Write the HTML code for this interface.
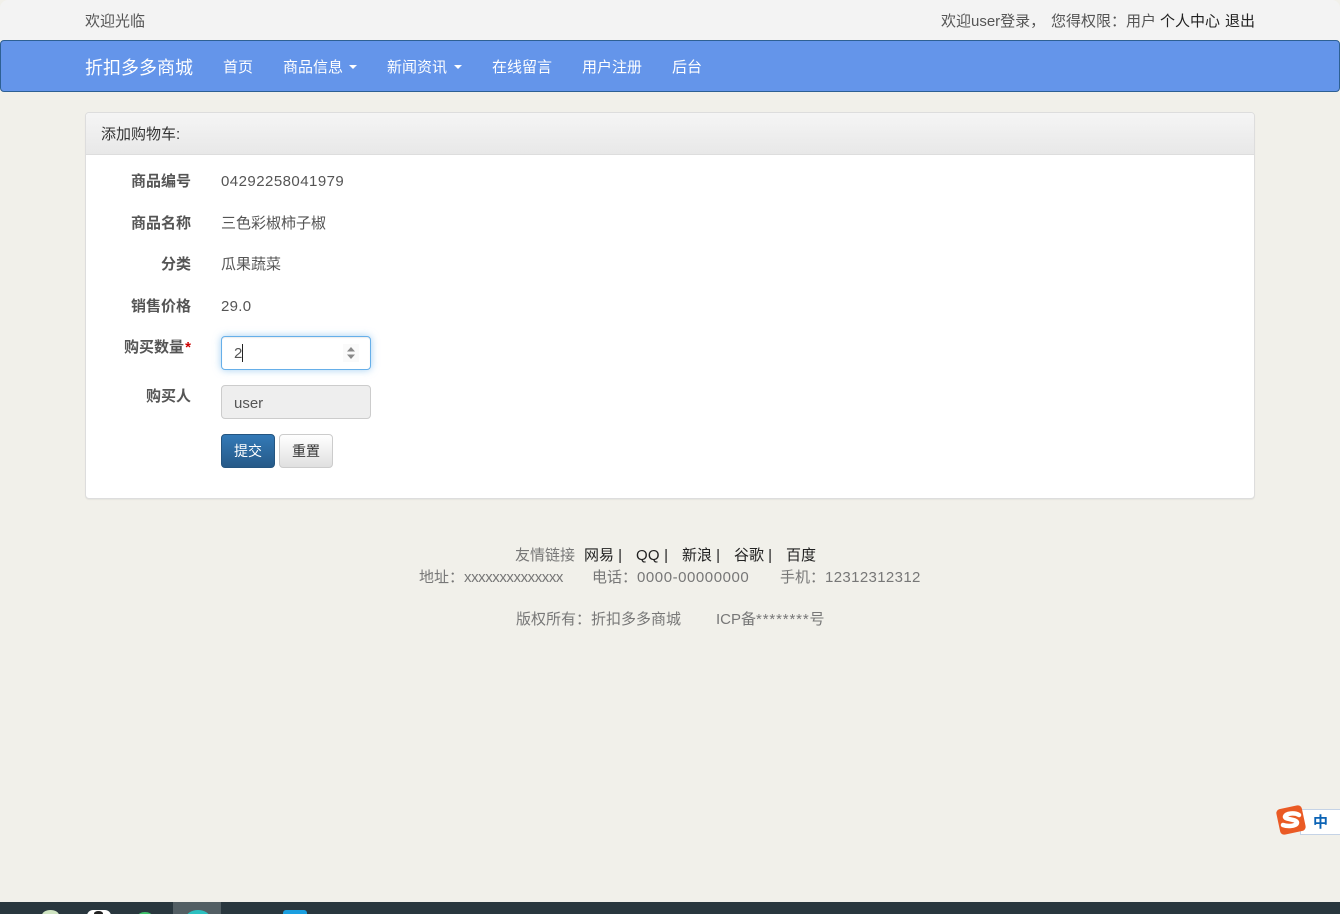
<!DOCTYPE html>
<html lang="zh-CN">
<head>
<meta charset="utf-8">
<title>添加购物车</title>
<style>
*{box-sizing:border-box}
html,body{margin:0;padding:0;width:1340px;height:914px;overflow:hidden}
body{position:relative;background:#f1f0ea;font-family:"Liberation Sans","Noto Sans CJK SC",sans-serif;font-size:15px;color:#555}
.t{position:absolute;white-space:pre;line-height:20px;height:20px}
.box{position:absolute}
.top{left:0;top:0;width:1340px;height:40px;background:#f3f3f3;border-radius:8px 8px 0 0}
.nav{left:0;top:40px;width:1340px;height:52px;background:#6495ea;border:1px solid #2e6093;border-radius:4px}
.n{color:#fff}
.caret{position:absolute;width:0;height:0;border-top:4px solid #fff;border-left:4px solid transparent;border-right:4px solid transparent}
.panel{left:85px;top:112px;width:1170px;height:387px;background:#fff;border:1px solid #ddd;border-radius:4px;box-shadow:0 1px 1px rgba(0,0,0,.05)}
.phead{left:86px;top:113px;width:1168px;height:42px;background:linear-gradient(#f5f5f5,#e8e8e8);border-bottom:1px solid #ddd;border-radius:3px 3px 0 0}
.lb{font-weight:bold;text-align:right;width:106px;left:85px}
.v{left:221px}
.f{color:#777}
.k{color:#222}
.task{left:0;top:902px;width:1340px;height:12px;background:#29373e;overflow:hidden}
</style>
</head>
<body>
<div class="box top"></div>
<div class="t" style="left:85px;top:12px">欢迎光临</div>
<div class="t" style="left:941px;top:12px">欢迎user登录，</div>
<div class="t" style="left:1051px;top:12px">您得权限：用户</div>
<div class="t k" style="left:1160px;top:12px">个人中心</div>
<div class="t k" style="left:1225px;top:12px">退出</div>

<div class="box nav"></div>
<div class="t n" style="left:85px;top:58px;font-size:18px">折扣多多商城</div>
<div class="t n" style="left:223px;top:58px">首页</div>
<div class="t n" style="left:283px;top:58px">商品信息</div>
<div class="caret" style="left:349px;top:65px"></div>
<div class="t n" style="left:387px;top:58px">新闻资讯</div>
<div class="caret" style="left:454px;top:65px"></div>
<div class="t n" style="left:492px;top:58px">在线留言</div>
<div class="t n" style="left:582px;top:58px">用户注册</div>
<div class="t n" style="left:672px;top:58px">后台</div>

<div class="box panel"></div>
<div class="box phead"></div>
<div class="t" style="left:101px;top:125px;color:#333">添加购物车:</div>

<div class="t lb" style="top:172px">商品编号</div>
<div class="t v" style="top:172px;letter-spacing:.46px">04292258041979</div>
<div class="t lb" style="top:214px">商品名称</div>
<div class="t v" style="top:214px">三色彩椒柿子椒</div>
<div class="t lb" style="top:255px">分类</div>
<div class="t v" style="top:255px">瓜果蔬菜</div>
<div class="t lb" style="top:297px">销售价格</div>
<div class="t v" style="top:297px;letter-spacing:.3px">29.0</div>

<div class="t lb" style="top:338px">购买数量<span style="color:#c00;display:inline-block;width:7px">*</span></div>
<div class="box" style="left:221px;top:336px;width:150px;height:34px;background:#fff;border:1px solid #66afe9;border-radius:4px;box-shadow:inset 0 1px 1px rgba(0,0,0,.075),0 0 8px rgba(102,175,233,.6)"></div>
<div class="t" style="left:234px;top:344px">2</div>
<div class="box" style="left:242px;top:344px;width:1px;height:18px;background:#222"></div>
<svg class="box" style="left:343px;top:344px" width="16" height="18" viewBox="0 0 16 18"><rect width="16" height="18" fill="#fafafa"/><path d="M4 7.500 8 3 12 7.500Z M4 10.500 8 15 12 10.500Z" fill="#8a8a8a"/></svg>

<div class="t lb" style="top:387px">购买人</div>
<div class="box" style="left:221px;top:385px;width:150px;height:34px;background:#eee;border:1px solid #ccc;border-radius:4px"></div>
<div class="t" style="left:234px;top:394px">user</div>

<div class="box" style="left:221px;top:434px;width:54px;height:34px;background:linear-gradient(#337ab7,#265a88);border:1px solid #245580;border-radius:4px"></div>
<div class="t" style="left:234px;top:441px;color:#fff;font-size:14px">提交</div>
<div class="box" style="left:279px;top:434px;width:54px;height:34px;background:linear-gradient(#fff,#e0e0e0);border:1px solid #ccc;border-radius:4px"></div>
<div class="t" style="left:292px;top:441px;color:#333;font-size:14px">重置</div>

<div class="t f" style="left:515px;top:546px">友情链接</div>
<div class="t k" style="left:584px;top:546px">网易 |</div>
<div class="t k" style="left:636px;top:546px;letter-spacing:.2px">QQ |</div>
<div class="t k" style="left:682px;top:546px">新浪 |</div>
<div class="t k" style="left:734px;top:546px">谷歌 |</div>
<div class="t k" style="left:786px;top:546px">百度</div>
<div class="t f" style="left:419px;top:568px">地址：<span style="letter-spacing:-.43px">xxxxxxxxxxxxxx</span></div>
<div class="t f" style="left:592px;top:568px">电话：<span style="letter-spacing:.55px">0000-00000000</span></div>
<div class="t f" style="left:780px;top:568px">手机：<span style="letter-spacing:.36px">12312312312</span></div>
<div class="t f" style="left:516px;top:610px">版权所有：折扣多多商城</div>
<div class="t f" style="left:716px;top:610px">ICP备<span style="letter-spacing:.85px">********</span>号</div>

<div class="box" style="left:1300px;top:809px;width:40px;height:26px;background:#fff;border:1px solid #c5d3e6;border-right:0"></div>
<div class="t" style="left:1313px;top:813px;color:#0b63b5;font-size:15px;font-weight:bold">中</div>
<svg class="box" style="left:1275px;top:804px" width="34" height="32" viewBox="0 0 34 32"><rect x="3" y="3" width="26" height="26" rx="4" fill="#ea5a24" transform="rotate(-12 16 16)"/><path d="M24 11C20 8.500 11 9 10 12.500 9.500 16 21 14.500 22 18.500 22 22 13 23 8 21" fill="none" stroke="#fff" stroke-width="4.500" stroke-linecap="round"/></svg>

<div class="box task">
<div class="box" style="left:173px;top:0;width:48px;height:12px;background:#535f64"></div>
<div class="box" style="left:42px;top:8px;width:17px;height:10px;border-radius:50%;background:#cfe4c2"></div>
<div class="box" style="left:87px;top:8px;width:24px;height:10px;border-radius:6px 6px 0 0;background:#fff"></div>
<div class="box" style="left:94px;top:9px;width:9px;height:5px;border-radius:50%;background:#222"></div>
<div class="box" style="left:138px;top:10px;width:14px;height:8px;border-radius:50%;background:#3ec26a"></div>
<div class="box" style="left:186px;top:8px;width:24px;height:16px;border-radius:50%;background:#2cc0c0"></div>
<div class="box" style="left:283px;top:8px;width:24px;height:8px;border-radius:3px 3px 0 0;background:#1b9fe0"></div>
</div>
</body>
</html>
